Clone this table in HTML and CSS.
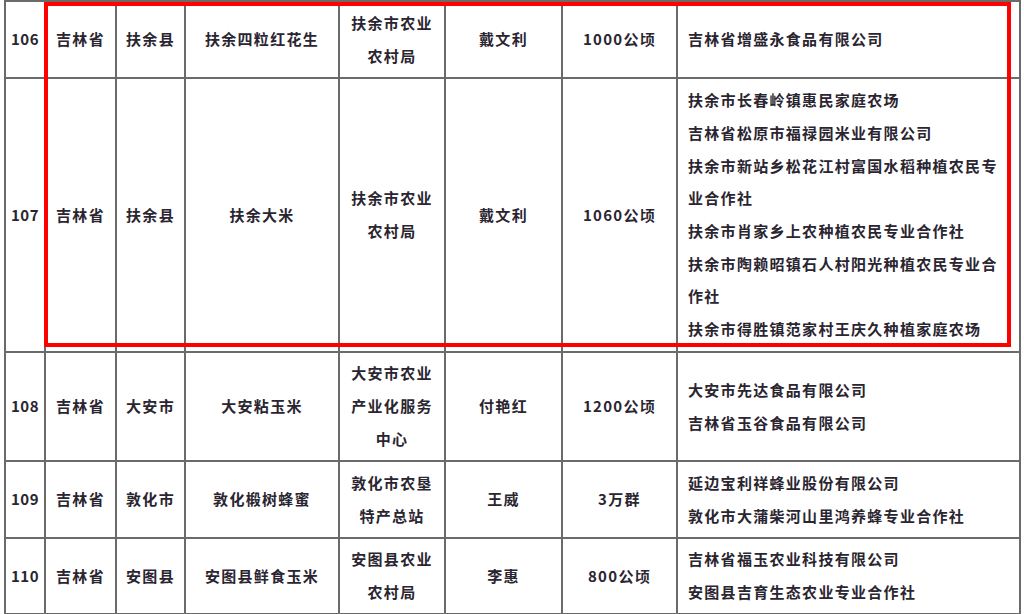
FILE: index.html
```html
<!DOCTYPE html>
<html lang="zh-CN">
<head>
<meta charset="utf-8">
<title>表格</title>
<link rel="stylesheet" href="styles.css">
</head>
<body>
<div class="page">
  <table class="grid">
    <colgroup>
      <col class="c-no"><col class="c-prov"><col class="c-county"><col class="c-prod">
      <col class="c-dept"><col class="c-person"><col class="c-scale"><col class="c-comp">
    </colgroup>
    <tr class="r106">
      <td>106</td><td>吉林省</td><td>扶余县</td><td>扶余四粒红花生</td>
      <td class="dept">扶余市农业农村局</td><td>戴文利</td><td>1000公顷</td>
      <td class="comp"><div>吉林省增盛永食品有限公司</div></td>
    </tr>
    <tr class="r107">
      <td>107</td><td>吉林省</td><td>扶余县</td><td>扶余大米</td>
      <td class="dept">扶余市农业农村局</td><td>戴文利</td><td>1060公顷</td>
      <td class="comp">
        <div>扶余市长春岭镇惠民家庭农场</div>
        <div>吉林省松原市福禄园米业有限公司</div>
        <div>扶余市新站乡松花江村富国水稻种植农民专业合作社</div>
        <div>扶余市肖家乡上农种植农民专业合作社</div>
        <div>扶余市陶赖昭镇石人村阳光种植农民专业合作社</div>
        <div>扶余市得胜镇范家村王庆久种植家庭农场</div>
      </td>
    </tr>
    <tr class="r108">
      <td>108</td><td>吉林省</td><td>大安市</td><td>大安粘玉米</td>
      <td class="dept">大安市农业产业化服务中心</td><td>付艳红</td><td>1200公顷</td>
      <td class="comp">
        <div>大安市先达食品有限公司</div>
        <div>吉林省玉谷食品有限公司</div>
      </td>
    </tr>
    <tr class="r109">
      <td>109</td><td>吉林省</td><td>敦化市</td><td>敦化椴树蜂蜜</td>
      <td class="dept">敦化市农垦特产总站</td><td>王威</td><td>3万群</td>
      <td class="comp">
        <div>延边宝利祥蜂业股份有限公司</div>
        <div>敦化市大蒲柴河山里鸿养蜂专业合作社</div>
      </td>
    </tr>
    <tr class="r110">
      <td>110</td><td>吉林省</td><td>安图县</td><td>安图县鲜食玉米</td>
      <td class="dept">安图县农业农村局</td><td>李惠</td><td>800公顷</td>
      <td class="comp">
        <div>吉林省福玉农业科技有限公司</div>
        <div>安图县吉育生态农业专业合作社</div>
      </td>
    </tr>
  </table>
  <div class="highlight"></div>
</div>
</body>
</html>
```

FILE: styles.css
```css
html, body {
  margin: 0;
  padding: 0;
  background: #ffffff;
}

.page {
  position: relative;
  width: 1024px;
  height: 614px;
  overflow: hidden;
  padding-left: 4px;
  box-sizing: border-box;
}

.grid {
  border-collapse: collapse;
  table-layout: fixed;
  width: 1015px;
  font-family: "Noto Sans CJK SC", "Noto Sans", sans-serif;
  font-weight: 700;
  font-size: 15px;
  letter-spacing: 1.3px;
  line-height: 32.7px;
  color: #2a2530;
}

.grid td {
  border: 2px solid #6a6a6a;
  padding: 0 8px;
  text-align: center;
  vertical-align: middle;
  overflow: hidden;
}

.c-no { width: 40px; }
.c-prov { width: 71px; }
.c-county { width: 69px; }
.c-prod { width: 154px; }
.c-dept { width: 106px; }
.c-person { width: 117px; }
.c-scale { width: 115px; }
.c-comp { width: 343px; }

.grid td:first-child {
  padding: 0;
  letter-spacing: 0.5px;
}

.grid td.dept {
  padding: 0 10px;
}

.grid td.comp {
  text-align: left;
  padding: 0 14px 0 10px;
}

.r106 { height: 77px; }
.r107 { height: 274px; }
.r108 { height: 109px; }
.r109 { height: 77px; }
.r110 { height: 76px; }

.highlight {
  position: absolute;
  left: 44px;
  top: 2px;
  width: 967px;
  height: 345px;
  box-sizing: border-box;
  border: 4px solid #ff0000;
  pointer-events: none;
}
```
